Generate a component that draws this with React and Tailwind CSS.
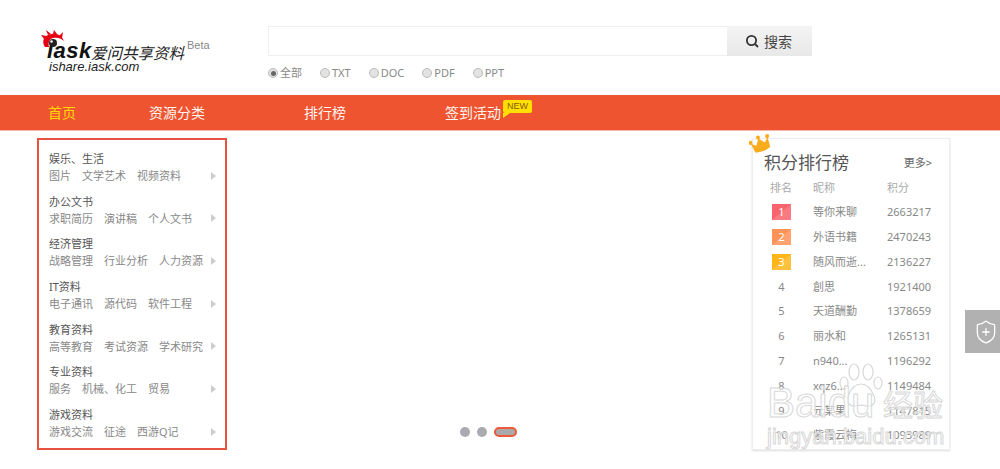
import React from 'react';
import { ShieldPlus } from 'lucide-react';

const cats = [
  { title: '娱乐、生活', subs: ['图片', '文学艺术', '视频资料'] },
  { title: '办公文书', subs: ['求职简历', '演讲稿', '个人文书'] },
  { title: '经济管理', subs: ['战略管理', '行业分析', '人力资源'] },
  { title: 'IT资料', subs: ['电子通讯', '源代码', '软件工程'] },
  { title: '教育资料', subs: ['高等教育', '考试资源', '学术研究'] },
  { title: '专业资料', subs: ['服务', '机械、化工', '贸易'] },
  { title: '游戏资料', subs: ['游戏交流', '征途', '西游Q记'] },
];

const ranks = [
  ['1', '等你来聊', '2663217'],
  ['2', '外语书籍', '2470243'],
  ['3', '随风而逝...', '2136227'],
  ['4', '創思', '1921400'],
  ['5', '天道酬勤', '1378659'],
  ['6', '丽水和', '1265131'],
  ['7', 'n940...', '1196292'],
  ['8', 'xqz6...', '1149484'],
  ['9', '元某果', '1147815'],
  ['10', '紫霞云梅', '1093989'],
];

const badgeColors = { 1: 'bg-[#f9636c]', 2: 'bg-[#ff9257]', 3: 'bg-[#ffb619]' };

const font = "font-['Noto_Sans','Noto_Sans_CJK_SC',sans-serif]";

function Logo() {
  return (
    <div className="relative w-[190px] h-[52px] mt-[27px] ml-[40px]">
      <span className="absolute left-[7px] top-[12px] font-['Liberation_Sans',sans-serif] font-bold italic text-[22px] leading-[24px] tracking-[0.5px] text-[#111]">
        iask
      </span>
      <svg className="absolute left-[1px] top-[3px]" width="24" height="21" viewBox="0 0 24 21">
        <path d="M4 17 C0 11 3 5 11 4 C17 3 21 6 23 11 C20 8 16 7 12 8 C8 9 7 13 8 17 Z" fill="#e60012" />
        <path d="M7 5 L5 0 L10 4 Z M12 4 L13 0 L16 4 Z M18 6 L22 2 L21 8 Z M3 9 L0 5 L6 6 Z" fill="#e60012" />
        <circle cx="12" cy="13" r="4" fill="#222" />
        <circle cx="10.5" cy="11.5" r="1.3" fill="#fff" />
      </svg>
      <span className="absolute left-[51px] top-[14px] font-['Noto_Sans_CJK_SC',sans-serif] text-[15.5px] leading-[22px] italic text-[#222] whitespace-nowrap">
        爱问共享资料
      </span>
      <span className="absolute left-[147px] top-[11px] font-['Liberation_Sans',sans-serif] text-[11px] leading-[14px] text-[#888]">
        Beta
      </span>
      <span className="absolute left-[9px] top-[32px] font-['Liberation_Sans',sans-serif] italic text-[13px] leading-[16px] text-[#222] whitespace-nowrap">
        ishare.iask.com
      </span>
    </div>
  );
}

function Radio({ label, checked }) {
  return (
    <span className="flex items-center gap-[2px]">
      <span className="w-[10px] h-[10px] rounded-full bg-[#e2e2e2] border border-[#bbb] flex items-center justify-center">
        {checked && <span className="w-[5px] h-[5px] rounded-full bg-[#666]" />}
      </span>
      <span>{label}</span>
    </span>
  );
}

function Crown() {
  return (
    <svg className="absolute left-[-4px] top-[-5px]" width="25" height="21" viewBox="0 0 25 21">
      <g transform="rotate(-22 12 11)">
        <path d="M3 6 L7.5 10 L12 4 L16.5 10 L21 6 L20 16 Q12 19 4 16 Z" fill="#f9ad1e" />
        <circle cx="3" cy="5" r="2" fill="#f9ad1e" />
        <circle cx="12" cy="3" r="2" fill="#f9ad1e" />
        <circle cx="21" cy="5" r="2" fill="#f9ad1e" />
      </g>
    </svg>
  );
}

function Watermark() {
  return (
    <div className="absolute left-[767px] top-[363px] w-[185px] h-[85px] pointer-events-none text-white/60 [-webkit-text-stroke:1px_#d8d8d8]">
      <svg className="absolute left-[72px] top-0" width="44" height="46" viewBox="0 0 44 46" fill="none" stroke="#d8d8d8" strokeWidth="1.2">
        <ellipse cx="15" cy="9" rx="5" ry="8" />
        <ellipse cx="29" cy="9" rx="5" ry="8" />
        <ellipse cx="5" cy="20" rx="4" ry="6" />
        <ellipse cx="39" cy="20" rx="4" ry="6" />
        <path d="M22 21 C15 21 11 28 9 33 C6 40 12 44 17 43 C20 42 24 42 27 43 C33 44 38 40 35 33 C33 28 29 21 22 21 Z" />
      </svg>
      <span className="absolute left-0 top-[22px] font-['Liberation_Sans',sans-serif] text-[42px] leading-[36px] whitespace-nowrap">
        Baidu
      </span>
      <span className="absolute left-[116px] top-[24px] font-['Noto_Sans_CJK_SC',sans-serif] text-[30px] leading-[32px] whitespace-nowrap">
        经验
      </span>
      <span className="absolute left-0 top-[62px] font-['Liberation_Sans',sans-serif] text-[22px] leading-[24px] whitespace-nowrap">
        jingyan.baidu.com
      </span>
    </div>
  );
}

export default function App() {
  return (
    <div className={`relative w-[1000px] h-[469px] overflow-hidden bg-white ${font}`}>
      {/* 顶部 logo + 搜索 */}
      <header className="flex h-[95px]">
        <Logo />
        <div className="ml-[38px] pt-[26px]">
          <div className="flex w-[544px] h-[30px]">
            <div className="w-[460px] border border-[#eee] border-r-0" />
            <div className="w-[85px] flex items-center justify-center gap-[5px] pr-[2px] bg-gradient-to-b from-[#f4f4f4] to-[#e8e8e8] text-[14px] text-[#444]">
              <svg width="14" height="14" viewBox="0 0 14 14" fill="none" stroke="#333" strokeWidth="1.8">
                <circle cx="6.5" cy="6.5" r="4.6" />
                <path d="M10 10 L13 13" />
              </svg>
              搜索
            </div>
          </div>
          <div className="flex items-center gap-[18px] mt-[10px] text-[11px] leading-[14px] text-[#888]">
            <Radio label="全部" checked />
            <Radio label="TXT" />
            <Radio label="DOC" />
            <Radio label="PDF" />
            <Radio label="PPT" />
          </div>
        </div>
      </header>

      {/* 导航 */}
      <nav className="flex items-center h-[36px] bg-[#ef5430] border-b border-[#f3b8a8] text-[14px] text-[#fff5f0] pl-[48px]">
        <span className="w-[101px] text-[#ffd800]">首页</span>
        <span className="w-[155px]">资源分类</span>
        <span className="w-[141px]">排行榜</span>
        <span className="relative">
          签到活动
          <span className="absolute left-[58px] top-[-2px] h-[13px] px-[4px] rounded-[2px] bg-[#ffe000] text-[#8a5a00] text-[9px] leading-[13px] font-['Liberation_Sans',sans-serif] whitespace-nowrap">
            NEW
          </span>
          <span className="absolute left-[58px] top-[11px] w-0 h-0 border-t-[5px] border-t-[#ffe000] border-r-[7px] border-r-transparent" />
        </span>
      </nav>

      <main className="flex pl-[37px] pt-[7px]">
        {/* 分类 */}
        <aside className="w-[190px] h-[312px] border-2 border-[#e8503f] pl-[10px] pr-[9px] pt-[11px] shrink-0">
          {cats.map((c) => (
            <div key={c.title} className="h-[42.7px]">
              <div className="text-[11px] leading-[16px] text-[#555]">{c.title}</div>
              <div className="flex items-center text-[11px] leading-[17px] text-[#888]">
                <div className="flex gap-[11px] whitespace-nowrap">
                  {c.subs.map((s) => (
                    <span key={s}>{s}</span>
                  ))}
                </div>
                <span className="ml-auto w-0 h-0 border-y-[4px] border-y-transparent border-l-[5px] border-l-[#ccc]" />
              </div>
            </div>
          ))}
        </aside>

        {/* 轮播 */}
        <div className="w-[525px] h-[312px] flex items-end justify-center gap-[7px] pb-[13px] pr-[2px]">
          <span className="w-[10px] h-[10px] rounded-full bg-[#a9abb0]" />
          <span className="w-[10px] h-[10px] rounded-full bg-[#a9abb0]" />
          <span className="w-[23px] h-[10px] rounded-full bg-[#aaa] border-2 border-[#f0583a]" />
        </div>

        {/* 积分排行榜 */}
        <section className="relative w-[198px] h-[312px] border border-[#eee] shadow-[0_1px_2px_#ddd] shrink-0">
          <Crown />
          <div className="flex items-center justify-between pl-[11px] pr-[17px] pt-[11px] h-[37px]">
            <span className="text-[17px] leading-[24px] text-[#555]">积分排行榜</span>
            <span className="text-[11px] text-[#666]">更多&gt;</span>
          </div>
          <div className="flex h-[20px] items-center text-[11px] text-[#aaa] mt-[2px]">
            <span className="w-[60px] pl-[17px]">排名</span>
            <span className="w-[74px]">昵称</span>
            <span>积分</span>
          </div>
          <div className="pt-[2px]">
            {ranks.map(([n, name, score]) => (
              <div key={n} className="flex h-[24.8px] items-center text-[11px] text-[#888]">
                <span className="w-[60px] pl-[19px] flex">
                  {badgeColors[n] ? (
                    <span className={`relative w-[19px] h-[16px] flex items-center justify-center text-white overflow-hidden ${badgeColors[n]}`}>
                      <span className="absolute right-0 bottom-0 w-0 h-0 border-b-[16px] border-b-white/15 border-l-[19px] border-l-transparent" />
                      <span className="relative">{n}</span>
                    </span>
                  ) : (
                    <span className="w-[19px] text-center">{n}</span>
                  )}
                </span>
                <span className="w-[74px]">{name}</span>
                <span>{score}</span>
              </div>
            ))}
          </div>
        </section>
      </main>

      {/* 右侧悬浮 */}
      <div className="absolute right-0 top-[310px] w-[35px] h-[43px] bg-[#b1b1b1] flex items-center justify-start pl-[8px]">
        <ShieldPlus size={26} color="#fff" strokeWidth={1.2} />
      </div>

      <Watermark />
    </div>
  );
}
